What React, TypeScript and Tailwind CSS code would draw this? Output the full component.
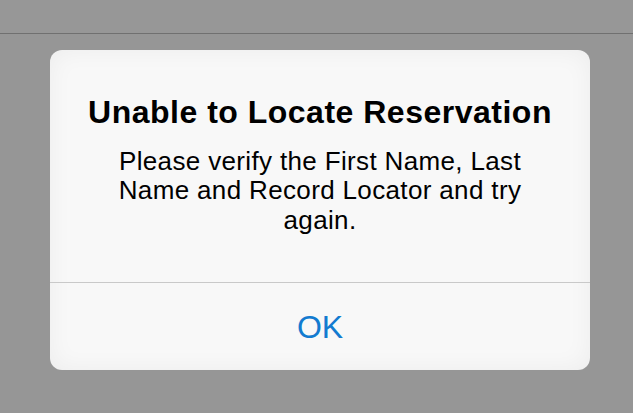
export default function App() {
  return (
    <div
      className="w-[633px] h-[413px] bg-[#969696] flex flex-col overflow-hidden"
      style={{ fontFamily: '"Liberation Sans", Arial, sans-serif' }}
    >
      <div className="h-[34px] shrink-0 border-b border-[#707070] bg-[#979797]" />
      <div className="flex pt-[16px] pl-[50px]">
        <div className="w-[540px] h-[320px] rounded-[12px] bg-[#f8f8f8] shadow-[inset_0_0_24px_rgba(0,0,0,0.05)] flex flex-col overflow-hidden">
          <div className="h-[232px] flex flex-col items-center pt-[43px]">
            <div className="text-[32px] leading-[38px] font-bold text-black tracking-[0.5px] text-center">
              Unable to Locate Reservation
            </div>
            <div className="mt-[16px] w-[440px] text-[26px] leading-[29.3px] text-black tracking-[0.35px] text-center">
              Please verify the First Name, Last Name and Record Locator and try again.
            </div>
          </div>
          <div className="h-px bg-[#c9c9c9]" />
          <div className="flex-1 flex items-center justify-center">
            <span className="text-[32px] leading-none text-[#137bd0]">OK</span>
          </div>
        </div>
      </div>
    </div>
  );
}
